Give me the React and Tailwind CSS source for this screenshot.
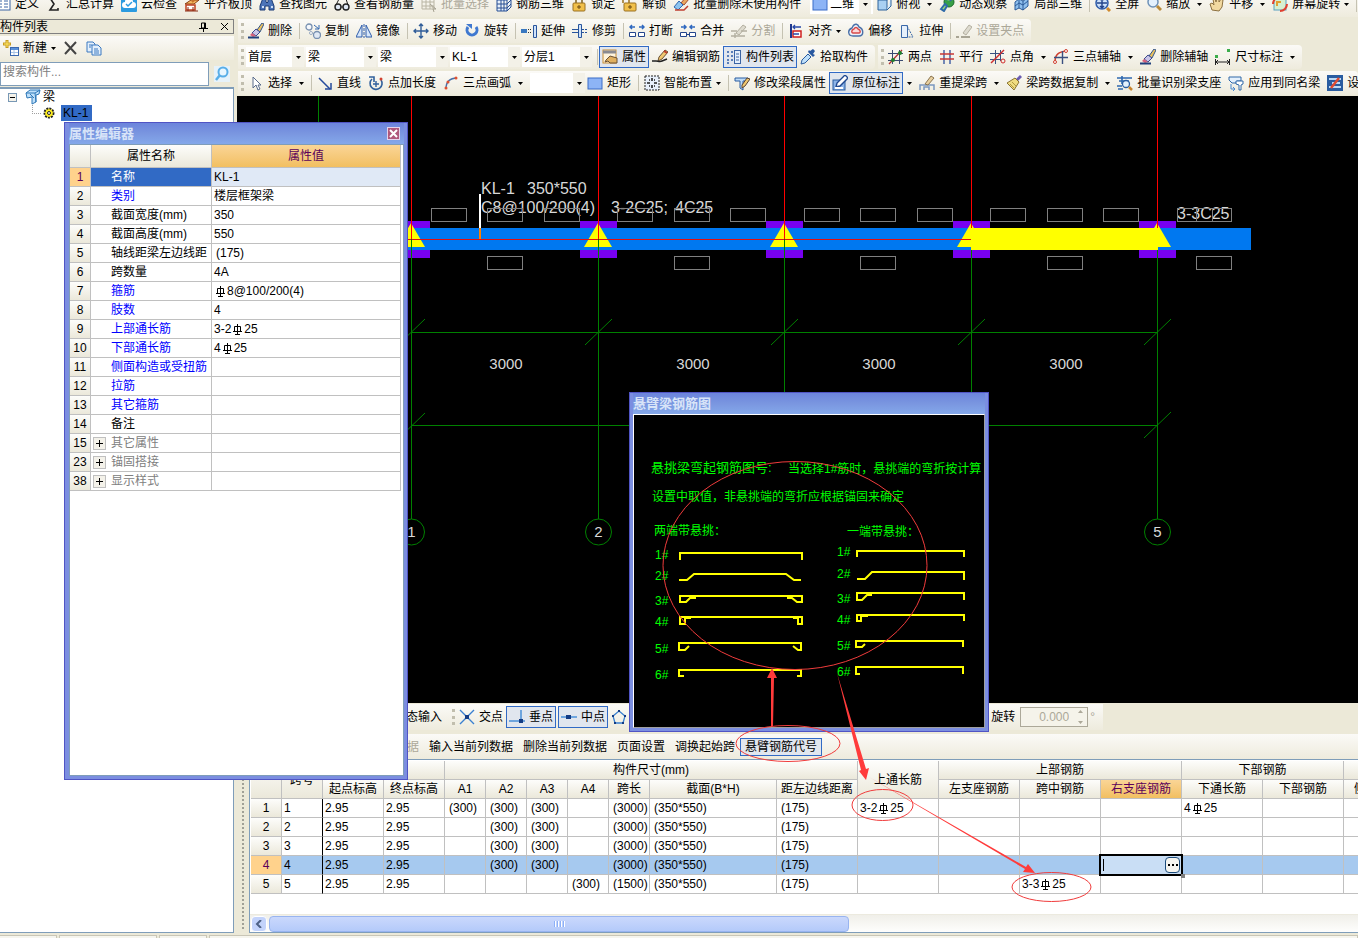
import React, { useState } from "react";

// 16x16 toolbar drawings
const eraser = (
  <>
    <path d="M9 7 14 0l2 1-4 8z" fill="#e8c060" stroke="#31548c" />
    <path d="m4 10 4-4 4 3-4 4z" fill="#c9c4e8" stroke="#3c4a8c" />
    <path d="m4 10 4 3-3 1-3-2z" fill="#d8607a" />
    <path d="M0 14.5h11" stroke="#20407c" strokeWidth="2" />
  </>
);
const pencil = (
  <>
    <path d="m6 12 1-4 6-7 3 2-6 7z" fill="#f0c870" stroke="#6b5134" />
    <path d="m12 2 3 2" stroke="#c04030" strokeWidth="2" />
  </>
);
const lens = (
  <>
    <circle cx="7" cy="6" r="5" fill="#e4f1fd" stroke="#6f92b8" strokeWidth="1.5" />
    <path d="m11 10 4 4" stroke="#b98a3a" strokeWidth="3" />
  </>
);
const lockBody = <rect x="2" y="7" width="12" height="8" rx="1" fill="#f1c04a" stroke="#9a7020" />;
const cube = (
  <>
    <path d="M2 4h9v10H2z" fill="#a9d0f2" stroke="#2d639c" />
    <path d="m2 4 3-3h10l-4 3M15 1v9l-4 4" fill="#d8ebfb" stroke="#2d639c" />
  </>
);

const ICONS = {
  define: (
    <>
      <rect x="1" y="2" width="14" height="12" fill="#fff" stroke="#3b64a4" />
      <path d="M4 5h3M4 8h3M4 11h3M9 5h4M9 8h4M9 11h4" stroke="#3b64a4" />
    </>
  ),
  sigma: <path d="M12 4V2H4l4 6-4 6h8v-2" fill="none" stroke="#222" strokeWidth="1.6" />,
  cloud: (
    <>
      <rect width="16" height="16" rx="1" fill="#2c9be0" />
      <path d="M4 12a3 3 0 0 1 0-6 4 4 0 0 1 8 0 3 3 0 0 1 0 6z" fill="#fff" />
      <path d="m5 8 2 2 4-4" fill="none" stroke="#2c9be0" strokeWidth="1.5" />
    </>
  ),
  slabTop: (
    <>
      <path d="m1 8 6-4h8l-5 4z" fill="#f4b860" stroke="#8a3c14" />
      <path d="M2 9h9v5H2z" fill="#fff" stroke="#c04020" strokeWidth="1.5" />
      <path d="M4 11v4M9 11v4M1 15h13" stroke="#8a2c14" />
      <path d="m8 6 6-5" stroke="#c8742c" strokeWidth="2" />
    </>
  ),
  binoculars: (
    <>
      <path d="M4 2h3v4l1 1 1-1V2h3l3 8v4h-5v-4H6v4H1v-4z" fill="#4c74b8" stroke="#1b3a74" />
      <path d="M3 11h2M12 11h2" stroke="#cfe0f8" strokeWidth="2" />
    </>
  ),
  glasses: (
    <>
      <circle cx="4" cy="11" r="3" fill="#dfe8f5" stroke="#222" strokeWidth="1.4" />
      <circle cx="12" cy="11" r="3" fill="#dfe8f5" stroke="#222" strokeWidth="1.4" />
      <path d="M7 11h2M2 9l3-6M14 9l-2-6" fill="none" stroke="#222" />
    </>
  ),
  batchSelect: (
    <>
      <path d="M1 2h12v11H1zM1 6h12M1 10h12M5 2v11M9 2v11" fill="none" stroke="#b9b5a4" />
      <path d="m9 8 6 5h-3l1 3" fill="#c9c5b4" stroke="#a8a494" />
    </>
  ),
  rebar3d: (
    <>
      <path d="M1 4 5 1h10v10l-4 4H1zM1 8h10l4-4M1 12h10l4-4" fill="#e8f1fc" stroke="#274f94" />
      <path d="M5 1v14M11 4v11M8 1v14M1 4h10l4-3" fill="none" stroke="#274f94" />
    </>
  ),
  lock: (
    <>
      <path d="M5 8V4a3 3 0 0 1 6 0v4" fill="none" stroke="#9a8450" strokeWidth="2" />
      {lockBody}
      <path d="M8 9v4M6 11h4" stroke="#6a4810" />
    </>
  ),
  unlock: (
    <>
      <path d="M1 7V4a3 3 0 0 1 6 0v4" fill="none" stroke="#b09050" strokeWidth="2" />
      {lockBody}
      <path d="M8 9v4M6 11h4" stroke="#6a4810" />
    </>
  ),
  batchDelete: (
    <>
      <path d="m8 7 5-6 3 2-5 6z" fill="#e8a860" stroke="#a04a2c" />
      <path d="M1 11 6 5l4 4-5 5z" fill="#8cc4f0" stroke="#3068b0" />
      <path d="M2 14h9l4-4" fill="none" stroke="#c04030" strokeWidth="1.5" />
    </>
  ),
  blueRect: <rect x="1" y="3" width="14" height="11" fill="#8db4f6" stroke="#3a6cc8" />,
  cube,
  observe: (
    <>
      <circle cx="10" cy="6" r="5" fill="#38a048" stroke="#1d6c2c" />
      <path d="M7 4c2-2 4-1 5 1M2 13l4-5 2 2-3 5z" fill="#9be070" stroke="#2f6aa8" strokeWidth="2" />
    </>
  ),
  local3d: (
    <>
      <path d="m1 6 4-3 4 2 5-3v8l-5 4-4-2-4 2z" fill="#8fc0ee" stroke="#2a5a98" />
      <path d="m5 3v9M9 5v9M1 10l4-3 4 2 5-4" fill="none" stroke="#2a5a98" />
    </>
  ),
  fullscreen: (
    <>
      <circle cx="7" cy="7" r="6" fill="#cfe2fa" stroke="#2f5caa" strokeWidth="1.5" />
      <path d="M7 2v10M2 7h10M5 4l2-2 2 2M5 10l2 2 2-2" fill="none" stroke="#24458c" strokeWidth="1.5" />
      <path d="m12 12 3 3" stroke="#d08a2c" strokeWidth="3" />
    </>
  ),
  zoomIcon: lens,
  pan: (
    <path
      d="M3 14 1 8l2-1 2 2-1-6 2-1 1 4 1-5 2 1v4l2-3 2 1-1 7-3 4z"
      fill="#f2d9a0"
      stroke="#8c7040"
    />
  ),
  screenRotate: (
    <>
      <rect x="2" y="2" width="12" height="12" fill="#d7efd0" stroke="#58a0c0" />
      <path d="M1 8a7 7 0 0 1 7-7M15 8a7 7 0 0 1-7 7" fill="none" stroke="#e04030" strokeWidth="2" />
      <path d="M5 10V6h4" fill="none" stroke="#e0a030" strokeWidth="2" />
    </>
  ),
  eraser,
  copy: (
    <>
      <circle cx="4" cy="4" r="3" fill="#f5f8fd" stroke="#7890b0" strokeWidth="1.3" />
      <circle cx="12" cy="12" r="3.5" fill="#dfe8f5" stroke="#7890b0" strokeWidth="1.3" />
      <path d="m9 2 5 4m0-4v4h-4" fill="none" stroke="#3468b0" />
      <circle cx="6" cy="10" r="1.5" fill="#fff" stroke="#9aaac0" />
    </>
  ),
  mirror: (
    <>
      <path d="M6 2v12H0zM10 2v12h6z" fill="#d6e6fa" stroke="#2f5caa" />
      <path d="M8 1v14" stroke="#2f5caa" strokeDasharray="3 1" />
    </>
  ),
  move: (
    <path
      d="M8 1v14M1 8h14M6 3l2-2 2 2M6 13l2 2 2-2M3 6 1 8l2 2M13 6l2 2-2 2"
      fill="none"
      stroke="#2f5c98"
      strokeWidth="1.4"
    />
  ),
  rotate: (
    <>
      <path d="M12 4a5 5 0 1 1-8 0" fill="none" stroke="#3f78d0" strokeWidth="3" />
      <path d="M2 1h6v5z" fill="#3f78d0" />
    </>
  ),
  extend: (
    <>
      <path d="M0 6h6v4H0z" fill="#3a78c0" />
      <path d="M7 6.500h4M7 9.500h4" stroke="#333" strokeDasharray="1 1" />
      <path d="M12.500 2.500h3v12h-3z" fill="#cfe2fa" stroke="#28549c" />
    </>
  ),
  trim: (
    <>
      <path d="M6.500 1.500h3v13h-3z" fill="#cfe2fa" stroke="#28549c" />
      <path d="M0 6.500h6M0 9.500h6" stroke="#28549c" />
      <path d="M10 6.500h5M10 9.500h5" stroke="#28549c" strokeDasharray="2 1" />
    </>
  ),
  breakIcon: (
    <>
      <path d="M1 4h5M10 4h5M3 2 1 4l2 2M13 2l2 2-2 2" fill="none" stroke="#2f68c0" strokeWidth="1.5" />
      <path d="M.5 9.500h6v4h-6zM9.500 9.500h6v4h-6z" fill="#fff" stroke="#24458c" />
    </>
  ),
  merge: (
    <>
      <path d="M1 4h5M10 4h5M4 2l2 2-2 2M12 2l-2 2 2 2" fill="none" stroke="#2f68c0" strokeWidth="1.5" />
      <path d="M.5 9.500h6v4h-6zM9.500 9.500h6v4h-6zM6 11.500h4" fill="#fff" stroke="#24458c" />
    </>
  ),
  split: (
    <>
      <path d="m5 10 7-8 3 2-7 8z" fill="#dedbcf" stroke="#b3afa0" />
      <path d="M0 8h6M10 8h6M0 13h14M4 10v5" stroke="#b3afa0" strokeWidth="1.4" />
    </>
  ),
  align: (
    <>
      <path d="M3 1v14" stroke="#20388c" strokeWidth="2" />
      <path d="M5 4h8M7 2 5 4l2 2" fill="none" stroke="#2848a8" strokeWidth="1.3" />
      <path d="M5 8h8v6H5z" fill="#fff" stroke="#d02020" strokeWidth="1.5" />
      <path d="M5 11h6" stroke="#2848a8" strokeWidth="1.5" />
    </>
  ),
  offset: (
    <>
      <path d="M5 3c2-3 5-2 6 1 5 2 5 9 0 9H5c-5 0-6-6-1-8z" fill="#eaf1fa" stroke="#4a70a8" strokeWidth="1.4" />
      <path d="M6 6c1-2 3-2 4 0 3 1 3 4 0 4H6c-3 0-3-3 0-4z" fill="#fbdada" stroke="#d84a4a" strokeWidth="1.4" />
    </>
  ),
  stretch: (
    <>
      <path d="M2.500 2.500h6v12h-6z" fill="#e6f0fb" stroke="#3a68a8" />
      <path d="m8 3 6 11H9" fill="none" stroke="#3a68a8" strokeDasharray="2 1" />
    </>
  ),
  grip: (
    <>
      <path d="m7 10 6-8 3 2-6 8z" fill="#dedbcf" stroke="#b3afa0" />
      <path d="M0 14h3M5 14h9" stroke="#a8a494" strokeWidth="2" />
    </>
  ),
  property: (
    <>
      <rect x="1" y="1" width="13" height="13" fill="#fff4dc" stroke="#c88c30" />
      <path d="M1 3h13" stroke="#8a8a90" strokeWidth="3" />
      <path d="m4 11 4-4 7 2v5H8l-2-2-3 1z" fill="#e0b060" stroke="#6b5134" />
    </>
  ),
  editRebar: (
    <>
      {pencil}
      <path d="M0 12h4c2 0 4 1 6 0l5-2" fill="none" stroke="#222" strokeWidth="1.5" />
    </>
  ),
  listIcon: (
    <>
      <path d="M1 3h2M5 3h2M1 7h2M5 7h2M1 11h2M5 11h2M1 14h2" stroke="#2d5ca8" strokeWidth="1.6" />
      <rect x="8.500" y="1.500" width="6" height="13" fill="#e4eefb" stroke="#3b64a4" />
      <path d="M10 5h3M10 8h3M10 11h3" stroke="#3b64a4" />
    </>
  ),
  dropper: (
    <>
      <path d="m1 15 1-4 6-6 3 3-6 6z" fill="#bfe0fa" stroke="#2a5ca0" />
      <path d="m8 3 5 5 2-2-2-1 2-3-2-2-3 2-1-1z" fill="#2858a0" />
    </>
  ),
  twoPoint: (
    <>
      <path d="M0 4.500h15M0 11.500h15M4.500 1v14M11.500 1v14" stroke="#3a4a70" />
      <path d="M1 15 14 1" stroke="#b03030" strokeWidth="1.3" />
      <circle cx="5" cy="11" r="2" fill="#20802c" />
      <circle cx="12" cy="4" r="2" fill="#20802c" />
    </>
  ),
  parallel: (
    <>
      <path d="M5 1v14M11 1v14" stroke="#2f4f9c" strokeWidth="1.3" />
      <path d="M1 5h14M1 10h14" stroke="#c83838" strokeWidth="1.6" />
    </>
  ),
  pointAngle: (
    <>
      <path d="M0 4.500h14M0 10.500h10M5.500 1v14M10.500 1v11" stroke="#3a5080" />
      <path d="M1 14 14 1" stroke="#d02c2c" strokeWidth="1.4" />
      <circle cx="13" cy="12" r="2" fill="none" stroke="#d02c2c" />
    </>
  ),
  threeAxis: (
    <>
      <path d="M2 13c0-8 4-10 11-11" fill="none" stroke="#d04030" strokeWidth="1.5" />
      <path d="M1 8.500h14M9.500 2v13" stroke="#3a5080" strokeWidth="1.4" />
      <circle cx="2" cy="13" r="1.5" fill="#fff" stroke="#d04030" />
      <circle cx="13" cy="2" r="1.5" fill="#fff" stroke="#d04030" />
    </>
  ),
  dimension: (
    <>
      <path d="M.5 10v6M14.500 10v6M1 13h13M3 11l-2 2 2 2M12 11l2 2-2 2" fill="none" stroke="#222" />
      <path d="M0 6h3v3H0zM12 0h3v3h-3z" fill="#3cae4c" />
    </>
  ),
  cursor: <path d="M5 2v11l3-3 2 5 2-1-2-4h3z" fill="#fff" stroke="#5a6c8c" />,
  line: (
    <>
      <path d="m2 3 11 11" stroke="#244a9c" strokeWidth="1.5" />
      <path d="M14 8v6H8" fill="none" stroke="#244a9c" strokeWidth="1.5" />
    </>
  ),
  pointLength: (
    <>
      <path d="M4 4a6 6 0 1 0 9 1" fill="none" stroke="#30609c" strokeWidth="1.6" />
      <path d="M1 2h5v5" fill="none" stroke="#30609c" strokeWidth="1.6" />
      <path d="M8 6v6M5 9h6" stroke="#30609c" strokeWidth="1.4" />
      <circle cx="13" cy="4" r="1.5" fill="#d04030" />
    </>
  ),
  arc: (
    <>
      <path d="M3 14C3 7 7 3 14 3" fill="none" stroke="#4a70a8" strokeWidth="1.4" />
      <circle cx="3" cy="13" r="1.5" fill="#e05030" />
      <circle cx="5" cy="7" r="1.5" fill="#e05030" />
      <circle cx="13" cy="3" r="1.5" fill="#e05030" />
    </>
  ),
  smart: (
    <>
      <rect x="1" y="1" width="14" height="14" fill="#e8f0fb" stroke="#222" strokeDasharray="2 1" />
      <path d="M5 5h1M10 5h1M5 11h1M10 11h1M8 3v3M8 10v3M3 8h3M10 8h3" stroke="#222" strokeWidth="1.6" />
    </>
  ),
  spanEdit: (
    <>
      <path d="M1 3h13v3H9v9l-3-2V6H1z" fill="#bfdcf8" stroke="#2a5ca0" />
      <path d="m8 10 5-7 3 1-5 7-3 2z" fill="#f0c870" stroke="#5a4434" />
    </>
  ),
  inPlace: (
    <>
      <rect x="1" y="5" width="12" height="10" fill="#8db4e8" stroke="#2a5ca0" />
      <path d="m4 12 1-4 8-8 3 3-8 8z" fill="#fff" stroke="#204890" strokeWidth="1.4" />
      <path d="M3 13h8" stroke="#fff" strokeWidth="2" />
    </>
  ),
  respan: (
    <>
      <path d="M1 15v-5h14v5M5 15v-3h5v3" fill="none" stroke="#7a96c0" strokeWidth="1.5" />
      <path d="m6 9 6-8 3 2-6 7z" fill="#e8d0a0" stroke="#8a7450" />
    </>
  ),
  brush: (
    <>
      <path d="m10 4 4-4 2 2-4 4z" fill="#6a5cb0" />
      <path d="m1 8 8-5 4 4-5 8z" fill="#f0dc80" stroke="#8a7430" />
      <path d="m4 9 4 4M6 7l4 4" stroke="#b09a40" />
    </>
  ),
  recognize: (
    <>
      <path d="M0 3h15M2 6h10M5 1v8M0 11h5M1 14h5" stroke="#2f68b0" strokeWidth="1.6" />
      <circle cx="9" cy="9" r="3.5" fill="#e4f1fd" stroke="#2a5ca0" strokeWidth="1.3" />
      <path d="m12 12 3 3" stroke="#c8842c" strokeWidth="2.5" />
    </>
  ),
  applySame: (
    <>
      <path d="M1 2h12v4H9l-1 2H4L1 5z" fill="#e4f0fc" stroke="#3068a8" />
      <path d="M8 6h7v3l-2 1v5h-2v-5L8 9z" fill="#fff" stroke="#3068a8" />
      <path d="M3 9v5h4M5 12l2 2-2 2" fill="none" stroke="#4a88d0" />
    </>
  ),
  setup: (
    <>
      <rect width="16" height="16" fill="#2a5ca0" />
      <path d="M2 4h12M2 12h12M5 8h8" stroke="#bcd8f4" strokeWidth="2" />
      <path d="m4 13 8-10" stroke="#e04a30" strokeWidth="2.5" />
    </>
  ),
  cross: (
    <>
      <path d="m1 1 14 14M15 1 1 15" stroke="#3a80d0" strokeWidth="1.4" />
      <rect x="6" y="6" width="4" height="4" fill="#143c84" />
    </>
  ),
  perpendicular: (
    <>
      <path d="M0 12h16M12 1v12" stroke="#4a90d8" strokeWidth="1.5" />
      <rect x="10" y="10" width="4" height="4" fill="#143c84" />
    </>
  ),
  midpoint: (
    <>
      <path d="M0 8h16" stroke="#4a90d8" strokeWidth="1.5" />
      <rect x="5" y="6" width="5" height="4" fill="#143c84" />
    </>
  ),
  pentagon: (
    <>
      <path d="m8 2 6 5-2 7H4L2 7z" fill="none" stroke="#3a80d0" strokeWidth="1.3" />
      <path d="M7 1h2v2H7zM1 6h2v2H1zM13 6h2v2h-2zM3 13h2v2H3zM11 13h2v2h-2z" fill="#143c84" />
    </>
  ),
  newItem: (
    <>
      <path d="M4 0v8M0 4h8" stroke="#c89c20" strokeWidth="3" />
      <path d="M4 1v6M1 4h6" stroke="#ffe868" />
      <rect x="7.5" y="7.5" width="8" height="8" fill="#fff" stroke="#3a68b0" />
      <path d="M8 9h7" stroke="#5a90d8" strokeWidth="2" />
      <path d="M8 12.500h7M11 10v5" stroke="#a8c4e8" />
    </>
  ),
  remove: <path d="m2 2 11 12M13 2 2 14" stroke="#444" strokeWidth="2" />,
  copyDoc: (
    <>
      <path d="M1 2h6l2 2v8H1z" fill="#e4f0fc" stroke="#3a78c0" />
      <path d="M6 5h6l3 3v7H6z" fill="#e4f0fc" stroke="#3a78c0" />
      <path d="M8 9h4M8 11h5M8 13h5M3 5h3M3 7h2" stroke="#3a78c0" />
    </>
  ),
  search: (
    <>
      <circle cx="9" cy="6" r="4.5" fill="#e8f6ff" stroke="#58aee8" strokeWidth="2" />
      <path d="m6 9-4 5" stroke="#58aee8" strokeWidth="2.5" />
    </>
  ),
  beam: (
    <>
      <path d="m1 4 4-3h10l-1 4-3 1v7l-4 2V8L2 9z" fill="#bfe0fa" stroke="#2f78b8" />
      <path d="M1 4h9l5-3M10 4l1 9M5 5l4 4" fill="none" stroke="#2f78b8" />
    </>
  ),
  gear: (
    <>
      <circle cx="8" cy="8" r="4.5" fill="#ffee20" stroke="#222" strokeWidth="2" strokeDasharray="2 1" />
      <circle cx="8" cy="8" r="3.5" fill="#ffee20" />
      <circle cx="8" cy="8" r="1.5" fill="#fff" stroke="#222" />
    </>
  ),
};

const Icon = ({ name }) => (
  <svg className="size-4 shrink-0" viewBox="0 0 16 16" aria-hidden="true">
    {ICONS[name]}
  </svg>
);

const Arrow = () => (
  <svg className="w-[5px] h-[3px] shrink-0" viewBox="0 0 5 3" aria-hidden="true">
    <path d="M0 0h5L2.500 3z" fill="#000" />
  </svg>
);

const Tool = ({ icon, label, active, disabled, menu }) => (
  <button
    disabled={disabled}
    aria-label={label || icon}
    className={`flex items-center gap-1 shrink-0 whitespace-nowrap ${
      active
        ? "h-[22px] px-0.5 -ml-1 mr-[3px] bg-[#e1e6ee] border border-[#316ac5]"
        : "mr-[7px]"
    } ${disabled ? "text-[#aca899]" : "text-black"}`}
  >
    {icon && <Icon name={icon} />}
    {label}
    {menu && (
      <span className={menu === "tight" ? "flex" : "flex pl-[3px]"}>
        <Arrow />
      </span>
    )}
  </button>
);

const Sep = () => <div className="w-px h-4 mr-[5px] bg-[#c5c2b2] shrink-0" />;

const Handle = () => (
  <div className="w-[3px] h-4 ml-[3px] mr-1 shrink-0 border-l-[3px] border-dotted border-[#c1beae]" />
);

const Combo = ({ label, value, width }) => (
  <div className={`relative h-5 mr-0.5 shrink-0 bg-white ${width}`}>
    <select
      aria-label={label}
      className="appearance-none w-full h-5 pl-0.5 bg-transparent outline-none leading-5"
      defaultValue={value}
    >
      <option>{value}</option>
    </select>
    <span className="absolute right-0 top-0 h-5 w-3 flex items-center justify-center bg-[#f3f1e8] pointer-events-none">
      <Arrow />
    </span>
  </div>
);

const Bar = ({ children, grow }) => (
  <div
    className={`h-6 flex items-center shrink-0 rounded-r-sm bg-linear-to-b from-[#fbfaf7] to-[#eeebdd] ${
      grow ? "w-full" : ""
    }`}
  >
    {children}
  </div>
);

// HRB400 bar symbol
const Rebar = () => (
  <svg className="inline-block w-[11px] h-[11px] mx-px align-[-2px]" viewBox="0 0 11 11" role="img" aria-label="HRB400">
    <path d="M2.500 2.500h6v5M2.500 2.500v5M5.500 0v11M1 7.500h9M3 10.500h5" fill="none" stroke="#000" />
  </svg>
);

// "C" between digits is drawn with the bar symbol
const BarText = ({ text }) => {
  const i = text.indexOf("C");
  if (i < 0) return text;
  return (
    <>
      {text.slice(0, i)}
      <Rebar />
      {text.slice(i + 1)}
    </>
  );
};

const TopBar = () => (
  <header className="flex items-center h-[26px] -mt-[9px] -ml-[5px] bg-linear-to-b from-[#fbfaf7] to-[#eeebdd]">
    <Tool icon="define" label="定义" />
    <Tool icon="sigma" label="汇总计算" />
    <Tool icon="cloud" label="云检查" />
    <Tool icon="slabTop" label="平齐板顶" />
    <Tool icon="binoculars" label="查找图元" />
    <Tool icon="glasses" label="查看钢筋量" />
    <Tool icon="batchSelect" label="批量选择" disabled />
    <Tool icon="rebar3d" label="钢筋三维" />
    <Tool icon="lock" label="锁定" />
    <Tool icon="unlock" label="解锁" />
    <Tool icon="batchDelete" label="批量删除未使用构件" />
    <div className="flex items-center bg-white pl-0.5 ml-0.5 mr-[3px] shrink-0">
      <Icon name="blueRect" />
      <Combo label="视图" value="二维" width="w-[43px]" />
    </div>
    <Tool icon="cube" label="俯视" menu="loose" />
    <Tool icon="observe" label="动态观察" />
    <Tool icon="local3d" label="局部三维" />
    <Sep />
    <Tool icon="fullscreen" label="全屏" />
    <Tool icon="zoomIcon" label="缩放" menu="loose" />
    <Tool icon="pan" label="平移" menu="loose" />
    <Tool icon="screenRotate" label="屏幕旋转" menu="tight" />
    <Sep />
  </header>
);

const ToolBars = () => (
  <div className="flex flex-col gap-0.5 mb-px pl-px">
    <div className="flex">
      <Bar>
        <Handle />
        <Tool icon="eraser" label="删除" />
        <Sep />
        <Tool icon="copy" label="复制" />
        <Tool icon="mirror" label="镜像" />
        <Sep />
        <Tool icon="move" label="移动" />
        <Tool icon="rotate" label="旋转" />
        <Sep />
        <Tool icon="extend" label="延伸" />
        <Tool icon="trim" label="修剪" />
        <Sep />
        <Tool icon="breakIcon" label="打断" />
        <Tool icon="merge" label="合并" />
        <Tool icon="split" label="分割" disabled />
        <Sep />
        <Tool icon="align" label="对齐" menu="tight" />
        <Tool icon="offset" label="偏移" />
        <Tool icon="stretch" label="拉伸" />
        <Sep />
        <Tool icon="grip" label="设置夹点" disabled />
      </Bar>
    </div>
    <div className="flex gap-[3px]">
      <Bar>
        <Handle />
        <span className="-ml-0.5" />
        <Combo label="楼层" value="首层" width="w-[58px]" />
        <Combo label="构件类别" value="梁" width="w-[70px]" />
        <Combo label="构件类型" value="梁" width="w-[70px]" />
        <Combo label="构件" value="KL-1" width="w-[70px]" />
        <Combo label="分层" value="分层1" width="w-[70px]" />
        <span className="w-[3px]" />
        <Sep />
        <Tool icon="property" label="属性" active />
        <Tool icon="editRebar" label="编辑钢筋" />
        <Tool icon="listIcon" label="构件列表" active />
        <Tool icon="dropper" label="拾取构件" />
      </Bar>
      <Bar>
        <Handle />
        <Tool icon="twoPoint" label="两点" />
        <Tool icon="parallel" label="平行" />
        <Tool icon="pointAngle" label="点角" menu="loose" />
        <Tool icon="threeAxis" label="三点辅轴" menu="loose" />
        <Tool icon="eraser" label="删除辅轴" />
        <Tool icon="dimension" label="尺寸标注" menu="loose" />
      </Bar>
    </div>
    <Bar grow>
      <Handle />
      <Tool icon="cursor" label="选择" menu="loose" />
      <Sep />
      <Tool icon="line" label="直线" />
      <Tool icon="pointLength" label="点加长度" />
      <Tool icon="arc" label="三点画弧" menu="loose" />
      <Combo label="画弧方式" value="" width="w-[55px]" />
      <Tool icon="blueRect" label="矩形" />
      <Sep />
      <Tool icon="smart" label="智能布置" menu="tight" />
      <Sep />
      <Tool icon="spanEdit" label="修改梁段属性" />
      <Tool icon="inPlace" label="原位标注" active />
      <button aria-label="更多标注" className="ml-px mr-[7px]">
        <Arrow />
      </button>
      <Tool icon="respan" label="重提梁跨" menu="loose" />
      <Tool icon="brush" label="梁跨数据复制" menu="loose" />
      <Tool icon="recognize" label="批量识别梁支座" />
      <Tool icon="applySame" label="应用到同名梁" />
      <Tool icon="setup" label="设置" />
    </Bar>
  </div>
);

const ComponentList = () => (
  <aside className="w-[234px] shrink-0 flex flex-col mr-[3px]">
    <div className="h-[15px] mb-0.5 flex items-center justify-between border border-l-0 border-[#808080] pr-1 leading-none">
      <span>构件列表</span>
      <span className="flex items-center gap-3">
        <button aria-label="固定">
          <svg className="w-[9px] h-[10px]" viewBox="0 0 9 10">
            <path d="M2.500 1h4v5h-4zM5.500 1v5M0 6.500h9M4.500 7v3" fill="none" stroke="#000" />
          </svg>
        </button>
        <button aria-label="关闭列表">
          <svg className="size-[9px]" viewBox="0 0 9 9">
            <path d="m1 1 7 7M8 1 1 8" stroke="#000" />
          </svg>
        </button>
      </span>
    </div>
    <div className="h-6 flex items-center pl-[3px] bg-linear-to-b from-[#fbfaf7] to-[#eeebdd]">
      <Tool icon="newItem" label="新建" menu="tight" />
      <button aria-label="删除构件" className="mr-[7px]">
        <Icon name="remove" />
      </button>
      <button aria-label="复制构件">
        <Icon name="copyDoc" />
      </button>
    </div>
    <div className="flex items-center h-[26px] mt-px">
      <input
        aria-label="搜索构件"
        placeholder="搜索构件..."
        className="w-[209px] h-6 bg-white border border-[#7f9db9] placeholder:text-[#808080] pb-1 pl-0.5 outline-none"
      />
      <button aria-label="搜索" className="ml-[5px] bg-[#e6f2fa]">
        <Icon name="search" />
      </button>
    </div>
    <div className="flex-1 bg-white border-t-2 border-r border-b border-[#7f9db9]">
      <div className="flex items-center h-4 pl-2">
        <button
          aria-label="折叠"
          className="size-[9px] border border-[#7898b5] bg-[#f4f2ea] flex items-center justify-center mr-2"
        >
          <span className="w-[5px] h-px bg-black" />
        </button>
        <Icon name="beam" />
        <span className="ml-0.5">梁</span>
      </div>
      <div className="flex items-center h-4 pl-8">
        <span className="w-[9px] h-[9px] mb-2 border-l border-b border-dotted border-[#a0a0a0]" />
        <Icon name="gear" />
        <span className="ml-1 h-4 w-[31px] pl-0.5 leading-4 bg-[#316ac5] text-black">KL-1</span>
      </div>
    </div>
  </aside>
);

const AXES = [411, 598, 784, 971, 1157];
const TOP_BOXES = [431, 487, 544, 617, 674, 730, 804, 860, 917, 990, 1047, 1103, 1177, 1196];
const BOTTOM_BOXES = [487, 674, 860, 1047, 1196];

const Drawing = () => (
  <main className="flex-1 bg-black overflow-hidden">
    <svg className="block w-full h-[607px]" fontFamily="'Liberation Sans', sans-serif">
      <g transform="translate(-237 -96)">
        <path d="M318.500 96v60" stroke="#008000" />
        <path d="M408 228h843v22H408z" fill="#0078f0" />
        {AXES.map((x) => (
          <path key={x} d={`M${x - 18} 221h37v7h-37zM${x - 18} 250h37v8h-37z`} fill="#7800f0" />
        ))}
        {AXES.map((x) => (
          <path key={x} d={`M${x} 223l14 24h-28z`} fill="#ffff00" />
        ))}
        <path d="M408 239.500h563" stroke="#e01010" />
        {AXES.map((x) => (
          <g key={x}>
            <path d={`M${x + 0.5} 96v143`} stroke="#ff0000" />
            <path d={`M${x + 0.5} 239v280M${x - 13} 345l27-26`} stroke="#008000" />
          </g>
        ))}
        <path d="M971 228h187v22H971z" fill="#ffff00" />
        <path d="M411 332.500h746M411 425.500h746M398 439l27-26M1144 438l27-26" stroke="#008000" />
        {[
          [411, "1"],
          [598, "2"],
          [1157, "5"],
        ].map(([x, n]) => (
          <g key={n}>
            <circle cx={x + 0.5} cy="532" r="13" fill="none" stroke="#008000" />
            <text x={x + 0.5} y="537" fontSize="15" fill="#d8d8d8" textAnchor="middle">
              {n}
            </text>
          </g>
        ))}
        <path d="M480 194v34" stroke="#fff" strokeWidth="2" />
        <path d="M480 228v11" stroke="#ff8000" strokeWidth="2" />
        <g fill="#d8d8d8" fontSize="16">
          <text x="481" y="194">KL-1</text>
          <text x="527" y="194">350*550</text>
          <text x="481" y="213">C8@100/200(4)</text>
          <text x="611" y="213">3-2C25;</text>
          <text x="675" y="213">4C25</text>
          <text x="1177" y="219">3-3C25</text>
        </g>
        <g fill="none" stroke="#808080">
          {TOP_BOXES.map((x) => (
            <rect key={x} x={x + 0.5} y="208.5" width="35" height="13" />
          ))}
          {BOTTOM_BOXES.map((x) => (
            <rect key={x} x={x + 0.5} y="256.5" width="35" height="13" />
          ))}
        </g>
        <g fill="#d8d8d8" fontSize="15" textAnchor="middle">
          {[506, 693, 879, 1066].map((x) => (
            <text key={x} x={x} y="369">
              3000
            </text>
          ))}
        </g>
      </g>
    </svg>
  </main>
);

const SnapBar = () => (
  <div className="h-[31px] pb-[3px] flex items-center pl-[137px]">
    <div className="flex items-center h-[26px] w-[729px] bg-linear-to-b from-[#fbfaf7] to-[#eeebdd] pl-5">
      <span className="mr-[7px]">动态输入</span>
      <Handle />
      <Tool icon="cross" label="交点" />
      <Tool icon="perpendicular" label="垂点" active />
      <span className="w-[3px]" />
      <Tool icon="midpoint" label="中点" active />
      <Tool icon="pentagon" />
      <label htmlFor="angle" className="ml-auto mr-[5px]">
        旋转
      </label>
      <div className="relative mr-0.5">
        <input
          id="angle"
          disabled
          defaultValue="0.000"
          className="block w-[68px] h-5 pr-[18px] text-right text-[#aca899] bg-[#f5f3ea] border border-[#aca899]"
        />
        <span className="absolute right-[5px] top-[3px] text-[#aca899]">
          <svg className="w-[5px] h-[14px]" viewBox="0 0 5 14">
            <path d="M0 3h5L2.500 0zM0 11h5l-2.500 3z" fill="#aca899" />
          </svg>
        </span>
      </div>
      <span className="mr-2 text-[#aca899]">°</span>
    </div>
  </div>
);

const COLS = [
  "w-[31px]", "w-[41px]", "w-[61px]", "w-[61px]", "w-[41px]", "w-[41px]", "w-[41px]", "w-[41px]", "w-[41px]",
  "w-[127px]", "w-[81px]", "w-[81px]", "w-[81px]", "w-[81px]", "w-[81px]", "w-[81px]", "w-[81px]", "w-[81px]",
];

const SPANS = [
  ["1", "2.95", "2.95", "(300)", "(300)", "(300)", "", "(3000)", "(350*550)", "(175)", "3-2C25", "", "", "", "4C25", "", ""],
  ["2", "2.95", "2.95", "", "(300)", "(300)", "", "(3000)", "(350*550)", "(175)", "", "", "", "", "", "", ""],
  ["3", "2.95", "2.95", "", "(300)", "(300)", "", "(3000)", "(350*550)", "(175)", "", "", "", "", "", "", ""],
  ["4", "2.95", "2.95", "", "(300)", "(300)", "", "(3000)", "(350*550)", "(175)", "", "", "", "", "", "", ""],
  ["5", "2.95", "2.95", "", "", "", "(300)", "(1500)", "(350*550)", "(175)", "", "", "3-3C25", "", "", "", ""],
];

const SUB_HEADS = [
  "起点标高", "终点标高", "A1", "A2", "A3", "A4", "跨长", "截面(B*H)", "距左边线距离",
  "左支座钢筋", "跨中钢筋", "右支座钢筋", "下通长筋", "下部钢筋", "侧面通长筋",
];

const Th = ({ children, hot, ...rest }) => (
  <th
    {...rest}
    className={`h-[19px] p-0 font-normal border-r border-b border-[#c0c0c0] whitespace-nowrap overflow-hidden leading-[18px] bg-linear-to-b ${
      hot ? "from-[#fad596] to-[#f2bf60] text-[#5a005a]" : "from-[#fdfdfb] to-[#ebe8da]"
    }`}
  >
    {children}
  </th>
);

const SpanTable = () => {
  const [current, setCurrent] = useState(3);

  return (
    <table className="table-fixed w-[1174px] border-separate border-spacing-0">
      <colgroup>
        {COLS.map((w, i) => (
          <col key={i} className={w} />
        ))}
      </colgroup>
      <thead>
        <tr>
          <Th rowSpan={2} />
          <Th rowSpan={2}>跨号</Th>
          <Th colSpan={2}>标高(m)</Th>
          <Th colSpan={7}>构件尺寸(mm)</Th>
          <Th rowSpan={2}>上通长筋</Th>
          <Th colSpan={3}>上部钢筋</Th>
          <Th colSpan={2}>下部钢筋</Th>
          <Th />
        </tr>
        <tr>
          {SUB_HEADS.map((h) => (
            <Th key={h} hot={h === "右支座钢筋"}>
              {h}
            </Th>
          ))}
        </tr>
      </thead>
      <tbody>
        {SPANS.map((row, r) => (
          <tr key={r} onClick={() => setCurrent(r)} className={r === current ? "bg-[#a6c9ef]" : "bg-white"}>
            <th
              className={`h-[19px] p-0 font-normal leading-[18px] border-r border-b border-[#c0c0c0] ${
                r === current ? "bg-[#ffd28c] text-[#5a005a]" : "bg-linear-to-b from-[#fdfdfb] to-[#ebe8da]"
              }`}
            >
              {r + 1}
            </th>
            {row.map((cell, c) =>
              r === 3 && c === 13 ? (
                <td key={c} className="h-[19px] p-0 border-r border-b border-[#c0c0c0]">
                  <div className="relative flex items-center h-[18px] pl-0.5 bg-[#c9def5] outline-2 outline-black">
                    <span className="w-px h-3 bg-black" />
                    <input aria-label="右支座钢筋" className="min-w-0 flex-1 h-4 bg-transparent outline-none" />
                    <button
                      aria-label="更多"
                      className="w-[15px] h-4 mr-px flex items-center justify-center gap-0.5 rounded-sm border border-[#1c4c7c] bg-[#f6f5f0]"
                    >
                      <i className="size-0.5 bg-black" />
                      <i className="size-0.5 bg-black" />
                      <i className="size-0.5 bg-black" />
                    </button>
                    <span className="absolute -right-1 -bottom-1 size-1 bg-[#808080]" />
                  </div>
                </td>
              ) : (
                <td
                  key={c}
                  className={`h-[19px] p-0 leading-[18px] border-r border-b border-b-[#c0c0c0] whitespace-nowrap ${
                    c === 0 ? "border-r-black" : "border-r-[#c0c0c0]"
                  } ${cell.startsWith("(") ? "pl-1" : "pl-0.5"}`}
                >
                  <BarText text={cell} />
                </td>
              ),
            )}
          </tr>
        ))}
      </tbody>
    </table>
  );
};

const DataPanel = () => (
  <section className="flex">
    <div className="w-3 shrink-0 flex justify-center">
      <div className="border-l-2 border-dotted border-[#a0a096] mb-1" />
    </div>
    <div className="flex-1 min-w-0 border-l border-b border-[#7f9db9] bg-white overflow-hidden">
      <div className="h-[26px] flex items-center pl-[109px] border-b border-[#7f9db9] bg-linear-to-b from-[#fbfaf7] to-[#eeebdd] whitespace-nowrap">
        <button disabled className="mr-[10px] text-[#aca899]">
          粘贴跨数据
        </button>
        <button className="mr-[10px]">输入当前列数据</button>
        <button className="mr-[10px]">删除当前列数据</button>
        <button className="mr-[10px]">页面设置</button>
        <button className="mr-[10px]">调换起始跨</button>
        <button className="-ml-[5px] px-1 h-[18px] leading-4 border border-[#316ac5] bg-[#e1e6ee]">
          悬臂钢筋代号
        </button>
      </div>
      <div className="pt-px pl-px overflow-hidden">
        <SpanTable />
      </div>
      <div className="mt-5 h-[18px] flex items-center gap-0.5 pl-px bg-linear-to-b from-[#f0efe9] to-[#fefefd] border-t border-[#eceadf]">
        <button
          aria-label="向左滚动"
          className="size-4 rounded-sm border border-white bg-[#c3d3fb] flex items-center justify-center"
        >
          <svg className="size-2" viewBox="0 0 8 8">
            <path d="M6 0 2 4l4 4" fill="none" stroke="#4d6185" strokeWidth="2" />
          </svg>
        </button>
        <div className="w-[580px] h-4 rounded-sm border border-[#98b4f0] bg-linear-to-b from-[#cad8fc] to-[#b4cafa] flex items-center justify-center gap-px">
          {[0, 1, 2, 3].map((i) => (
            <i key={i} className="w-px h-1.5 bg-[#8cb0f8] border-r border-white box-content" />
          ))}
        </div>
      </div>
    </div>
  </section>
);

// type: h = blue label, g = grey collapsible group
const PROPS = [
  [1, "名称", "KL-1"],
  [2, "类别", "楼层框架梁", "h"],
  [3, "截面宽度(mm)", "350"],
  [4, "截面高度(mm)", "550"],
  [5, "轴线距梁左边线距", "(175)"],
  [6, "跨数量", "4A"],
  [7, "箍筋", "C8@100/200(4)", "h"],
  [8, "肢数", "4", "h"],
  [9, "上部通长筋", "3-2C25", "h"],
  [10, "下部通长筋", "4C25", "h"],
  [11, "侧面构造或受扭筋", "", "h"],
  [12, "拉筋", "", "h"],
  [13, "其它箍筋", "", "h"],
  [14, "备注", ""],
  [15, "其它属性", "", "g"],
  [23, "锚固搭接", "", "g"],
  [38, "显示样式", "", "g"],
];

const TitleBar = ({ title, children }) => (
  <div className="h-[21px] flex items-center justify-between pr-1 text-[13px] font-bold text-[#d8e4f8] bg-linear-to-b from-[#6c84dc] via-[#7a96e0] to-[#84a8ea]">
    <h2>{title}</h2>
    {children}
  </div>
);

const PropertyEditor = () => (
  <div className="absolute left-[64px] top-[122px] w-[344px] h-[658px] flex flex-col border border-[#5054c4] bg-[#7b8ee0] pl-1 pr-[3px] pb-[3px]">
    <TitleBar title="属性编辑器">
      <button
        aria-label="关闭"
        className="size-[13px] bg-[#b0587c] border border-[#e4d4ec] flex items-center justify-center"
      >
        <svg className="size-[9px]" viewBox="0 0 9 9">
          <path d="m1 1 7 7M8 1 1 8" stroke="#fff" strokeWidth="2" />
        </svg>
      </button>
    </TitleBar>
    <div className="flex-1 bg-white border border-[#7f9db9]">
      <table className="table-fixed w-[331px] border-separate border-spacing-0">
        <colgroup>
          <col className="w-[21px]" />
          <col className="w-[121px]" />
          <col className="w-[189px]" />
        </colgroup>
        <thead>
          <tr className="h-[23px]">
            <Th />
            <Th>属性名称</Th>
            <Th hot>属性值</Th>
          </tr>
        </thead>
        <tbody>
          {PROPS.map(([n, name, value, type]) => (
            <tr key={n}>
              <th
                className={`h-[19px] p-0 font-normal leading-[18px] border-r border-b border-[#c0c0c0] ${
                  n === 1 ? "bg-[#ffd28c] text-[#5a005a]" : "bg-linear-to-b from-[#fdfdfb] to-[#ebe8da]"
                }`}
              >
                {n}
              </th>
              <td
                className={`h-[19px] p-0 leading-[18px] border-r border-b border-[#c0c0c0] whitespace-nowrap overflow-hidden ${
                  n === 1 ? "bg-[#316ac5] text-white" : ""
                } ${type === "h" ? "text-[#0000ff]" : ""} ${type === "g" ? "text-[#808080]" : ""}`}
              >
                <div className="flex items-center">
                  <span className="w-5 pl-0.5 shrink-0">
                    {type === "g" && (
                      <button
                        aria-label={`展开${name}`}
                        className="size-[13px] border border-[#c0c0c0] bg-[#f4f2ea] flex items-center justify-center"
                      >
                        <svg className="size-[7px]" viewBox="0 0 7 7">
                          <path d="M0 3.500h7M3.500 0v7" stroke="#000" />
                        </svg>
                      </button>
                    )}
                  </span>
                  {name}
                </div>
              </td>
              <td
                className={`h-[19px] p-0 leading-[18px] border-r border-b border-[#c0c0c0] ${
                  n === 1 ? "bg-[#e0e9f6]" : ""
                } ${value.startsWith("(") ? "pl-1" : "pl-0.5"}`}
              >
                <BarText text={value} />
              </td>
            </tr>
          ))}
        </tbody>
      </table>
    </div>
  </div>
);

const LEFT_BARS = [
  "M680 560v-7h122v7",
  "M679 580h8l7-6h92l8 6h7",
  "M696 598h-6l-4 4h-6v-6h122v6h-5l-5-4h-5",
  "M691 618h-6v6h-5v-7h122v7h-4v-6h-5",
  "M689 646l-4 4h-6v-7h122v7h-3l-5-4",
  "M684 676h-5v-6h122v6h-4",
];
const RIGHT_BARS = [
  "M857 557v-6h107v6",
  "M857 579h8l7-7h92v8",
  "M872 595h-5l-5 5h-5v-7h107v7",
  "M868 616h-7v5h-4v-6h107v6",
  "M865 644l-3 3h-6v-6h107v6",
  "M860 674h-4v-7h107v7",
];
const LEFT_Y = [559, 580, 605, 626, 653, 679];
const RIGHT_Y = [556, 578, 603, 624, 650, 676];

const RebarDialog = () => (
  <div className="absolute left-[629px] top-[392px] w-[360px] border border-[#5054c4] bg-[#7b8ee0] px-[3px] pb-[3px]">
    <TitleBar title="悬臂梁钢筋图" />
    <svg className="block w-full h-[314px] bg-black border border-white border-b-[#a0a0a0] border-r-[#a0a0a0]">
      <g transform="translate(-634 -415)">
        <g fill="#00ff00" fontSize="12">
          <text x="651" y="472" fontSize="13">悬挑梁弯起钢筋图号:</text>
          <text x="788" y="473">当选择1#筋时，悬挑端的弯折按计算</text>
          <text x="652" y="501">设置中取值，非悬挑端的弯折应根据锚固来确定</text>
          <text x="654" y="535">两端带悬挑：</text>
          <text x="847" y="536">一端带悬挑：</text>
          {LEFT_Y.map((y, i) => (
            <text key={y} x="655" y={y}>{`${i + 1}#`}</text>
          ))}
          {RIGHT_Y.map((y, i) => (
            <text key={y} x="837" y={y}>{`${i + 1}#`}</text>
          ))}
        </g>
        <g fill="none" stroke="#ffff00" strokeWidth="2">
          {[...LEFT_BARS, ...RIGHT_BARS].map((d) => (
            <path key={d} d={d} />
          ))}
        </g>
      </g>
    </svg>
  </div>
);

const Markup = () => (
  <svg className="absolute left-0 top-0 w-full h-full pointer-events-none" aria-hidden="true">
    <g fill="none" stroke="#f03c3c">
      <ellipse cx="795" cy="565.5" rx="132" ry="104" />
      <ellipse cx="788" cy="743.5" rx="52" ry="18" />
      <ellipse cx="882.5" cy="805" rx="30.5" ry="15.5" />
      <ellipse cx="1051.5" cy="887" rx="39.5" ry="14.5" />
    </g>
    <g fill="#ff3b3b">
      <path d="M771 726v-48h-4l5-10 5 10h-3l-1 48z" />
      <path d="M837 673l24 97-2 1 7 9 3-12-3 1z" />
      <path d="M869 777l156 92-2 3 12 1-7-9-2 3z" />
    </g>
  </svg>
);

const App = () => {
  return (
    <div className="relative min-h-screen flex flex-col overflow-hidden bg-[#ece9d8] text-xs text-black font-['Liberation_Sans','Noto_Sans_CJK_SC',sans-serif]">
      <TopBar />
      <div className="flex flex-1 mt-0.5">
        <ComponentList />
        <div className="flex-1 min-w-0 flex flex-col overflow-hidden">
          <ToolBars />
          <Drawing />
          <SnapBar />
          <DataPanel />
        </div>
      </div>
      <footer className="h-[5px] pt-0.5 flex gap-0.5">
        <div className="w-[57px] border-t border-r border-[#c9c6b6] bg-[#f6f5ee]" />
        <div className="w-[98px] border border-b-0 border-[#c9c6b6] bg-[#f6f5ee]" />
        <div className="w-12 border border-b-0 border-[#c9c6b6] bg-[#f6f5ee]" />
        <div className="flex-1 border border-b-0 border-[#c9c6b6] bg-[#f6f5ee]" />
      </footer>
      <PropertyEditor />
      <RebarDialog />
      <Markup />
    </div>
  );
};

export default App;
